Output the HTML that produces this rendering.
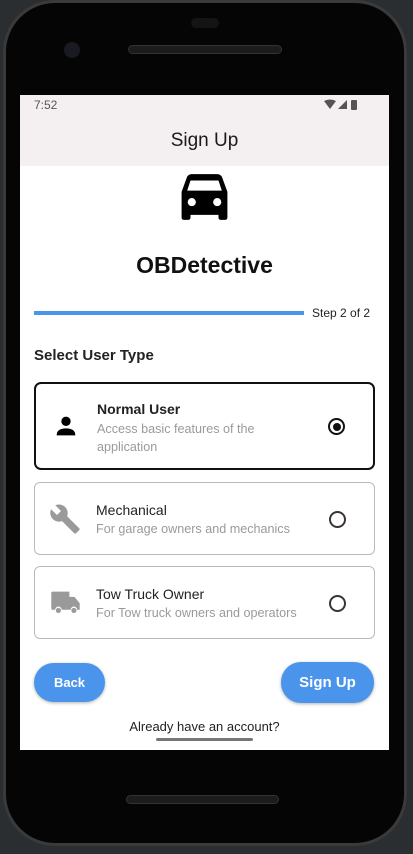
<!DOCTYPE html>
<html><head><style>
*{margin:0;padding:0;box-sizing:border-box}
body{width:413px;height:854px;background:#2a2e30;position:relative;overflow:hidden;font-family:"Liberation Sans",Roboto,sans-serif}
.phone{position:absolute;left:3px;top:0;width:404px;height:846px;background:#050505;border-radius:52px;border:3px solid #3a3a3a}
.screen{position:absolute;left:20px;top:95px;width:369px;height:655px;background:#fff;overflow:hidden}
.abs{position:absolute}
.card{position:absolute;left:14px;width:341px;border:1px solid #bdb8ba;border-radius:6px}
.t{position:absolute;font-size:14px;color:#222}
.s{position:absolute;font-size:12.6px;color:#9a9a9a;line-height:18px}
.radio{position:absolute;right:28px;width:17px;height:17px;border:2px solid #3a3436;border-radius:50%}
.btn{position:absolute;background:#4a94ec;color:#fff;border-radius:20px;text-align:center;box-shadow:0 1px 3px rgba(0,0,0,.3)}
</style></head><body>
<div class="phone"></div>
<div class="abs" style="left:64px;top:42px;width:16px;height:16px;border-radius:50%;background:#1a1a22"></div>
<div class="abs" style="left:128px;top:45px;width:154px;height:9px;border-radius:5px;background:#1c1c1c;border:1px solid #333"></div>
<div class="abs" style="left:191px;top:18px;width:28px;height:10px;border-radius:5px;background:#141414"></div>
<div class="abs" style="left:126px;top:795px;width:153px;height:9px;border-radius:5px;background:#1c1c1c;border:1px solid #333"></div>
<div class="screen">
 <div class="abs" style="left:0;top:0;width:369px;height:71px;background:#f4f0f1"></div>
 <div class="abs" style="left:14px;top:3px;font-size:12px;color:#555">7:52</div>
 <svg class="abs" style="left:304px;top:4px" width="40" height="11" viewBox="0 0 40 11"><path d="M0 2 Q6 -1 12 2 L6 10Z" fill="#555"/><path d="M14 10 L23 1 L23 10Z" fill="#555"/><rect x="27" y="1" width="6" height="10" rx="1" fill="#555"/></svg>
 <div class="abs" style="left:0;width:369px;top:35px;text-align:center;font-size:19px;color:#1a1a1a">Sign Up</div>
 <svg class="abs" style="left:152px;top:74px" width="65" height="56" viewBox="0 0 24 22"><path d="M5 3.5 Q5.5 2 7 2 L17 2 Q18.5 2 19 3.5 L21 9 L21 19 Q21 20 20 20 L18.5 20 Q17.5 20 17.5 19 L17.5 18 L6.5 18 L6.5 19 Q6.5 20 5.5 20 L4 20 Q3 20 3 19 L3 9Z" fill="#000"/><path d="M6.5 4.5 L17.5 4.5 L18.8 8.5 L5.2 8.5Z" fill="#fff"/><circle cx="7" cy="13" r="1.6" fill="#fff"/><circle cx="17" cy="13" r="1.6" fill="#fff"/></svg>
 <div class="abs" style="left:0;width:369px;top:157px;text-align:center;font-size:23px;font-weight:bold;color:#111">OBDetective</div>
 <div class="abs" style="left:14px;top:216px;width:270px;height:4px;background:#4a94ec"></div>
 <div class="abs" style="left:292px;top:211px;font-size:12px;color:#222">Step 2 of 2</div>
 <div class="abs" style="left:14px;top:252px;font-size:15px;font-weight:bold;color:#222">Select User Type</div>
 <div class="card" style="top:287px;height:88px;border:2px solid #111;border-radius:7px">
  <svg class="abs" style="left:16px;top:28px" width="28" height="28" viewBox="0 0 24 24"><circle cx="12" cy="8" r="4" fill="#000"/><path d="M4 20 Q4 14 12 14 Q20 14 20 20Z" fill="#000"/></svg>
  <div class="t" style="left:61px;top:17px;font-weight:bold">Normal User</div>
  <div class="s" style="left:61px;top:36px">Access basic features of the<br>application</div>
  <div class="radio" style="top:34px;border-color:#111"><div style="margin:2.5px;width:8px;height:8px;border-radius:50%;background:#111"></div></div>
 </div>
 <div class="card" style="top:387px;height:73px">
  <svg class="abs" style="left:14px;top:20px" width="32" height="32" viewBox="0 0 24 24"><path d="M22.7 19l-9.1-9.1c.9-2.3.4-5-1.5-6.9-2-2-5-2.4-7.4-1.3L9 6 6 9 1.6 4.7C.4 7.1.9 10.1 2.9 12.1c1.9 1.9 4.6 2.4 6.9 1.5l9.1 9.1c.4.4 1 .4 1.4 0l2.3-2.3c.5-.4.5-1.1.1-1.4z" fill="#9a9a9a"/></svg>
  <div class="t" style="left:61px;top:19px">Mechanical</div>
  <div class="s" style="left:61px;top:37px">For garage owners and mechanics</div>
  <div class="radio" style="top:28px"></div>
 </div>
 <div class="card" style="top:471px;height:73px">
  <svg class="abs" style="left:15px;top:22px" width="31" height="26" viewBox="0 0 24 20"><path d="M1 3 Q1 2 2 2 L15 2 L15 6 L19 6 L23 11 L23 16 L21 16 A2.5 2.5 0 0 0 16 16 L9 16 A2.5 2.5 0 0 0 4 16 L2 16 Q1 16 1 15Z" fill="#9a9a9a"/><circle cx="6.5" cy="16.5" r="2" fill="#9a9a9a"/><circle cx="18.5" cy="16.5" r="2" fill="#9a9a9a"/></svg>
  <div class="t" style="left:61px;top:19px">Tow Truck Owner</div>
  <div class="s" style="left:61px;top:37px">For Tow truck owners and operators</div>
  <div class="radio" style="top:28px"></div>
 </div>
 <div class="btn" style="left:14px;top:568px;width:71px;height:39px;line-height:39px;font-size:13px;font-weight:bold">Back</div>
 <div class="btn" style="left:261px;top:567px;width:93px;height:41px;line-height:41px;font-size:15px;font-weight:bold">Sign Up</div>
 <div class="abs" style="left:0;width:369px;top:624px;text-align:center;font-size:13px;color:#222">Already have an account?</div>
 <div class="abs" style="left:136px;top:643px;width:97px;height:3px;border-radius:2px;background:#777"></div>
</div>
</body></html>
